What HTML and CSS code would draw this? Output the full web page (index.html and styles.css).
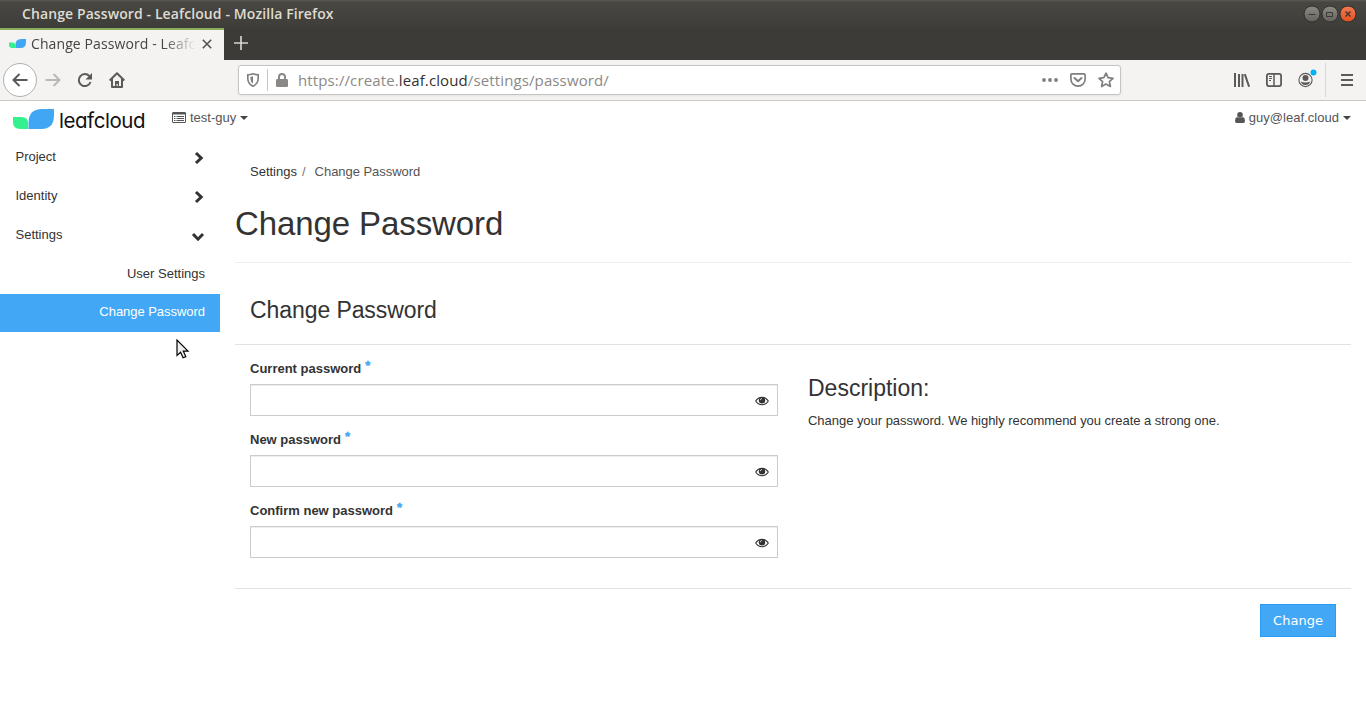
FILE: index.html
```html
<!DOCTYPE html>
<html lang="en">
<head>
<meta charset="utf-8">
<title>Change Password - Leafcloud</title>
<link rel="stylesheet" href="styles.css">
</head>
<body>
<svg class="defs" aria-hidden="true">
  <symbol id="chevron" viewBox="0 0 10 14"><path d="M2 2l5.200 5L2 12" fill="none" stroke="#333" stroke-width="3"/></symbol>
  <symbol id="eye" viewBox="0 0 14 10"><path d="M.7 5C3.800.1 10.200.1 13.300 5 10.200 9.900 3.800 9.900.7 5z" fill="none" stroke="#333" stroke-width="1.100"/><circle cx="7" cy="4.300" r="3.200" fill="#333"/><path d="M5.300 4.200A1.700 1.700 0 0 1 7 2.500" fill="none" stroke="#fff" stroke-width=".7"/></symbol>
  <symbol id="leaves" viewBox="0 0 41 20"><path d="M0 8h8.500q6.500 0 6.500 6v6H7Q0 20 0 13z" fill="#34f08f"/><path d="M15.500 20v-6Q15.500 0 29 0h12v6.500Q41 20 28 20z" fill="#41a7f5"/></symbol>
</svg>
<header class="titlebar">
  <span class="window-title">Change Password - Leafcloud - Mozilla Firefox</span>
  <svg class="window-buttons" width="54" height="18" viewBox="0 0 54 18">
    <defs>
      <linearGradient id="gray" x2="0" y2="1"><stop stop-color="#8d8b84"/><stop offset="1" stop-color="#64625c"/></linearGradient>
      <linearGradient id="orange" x2="0" y2="1"><stop stop-color="#f67a50"/><stop offset="1" stop-color="#e2501f"/></linearGradient>
    </defs>
    <g stroke="#32312d"><circle cx="9" cy="9" r="8" fill="url(#gray)"/><circle cx="27" cy="9" r="8" fill="url(#gray)"/><circle cx="45" cy="9" r="8" fill="url(#orange)"/></g>
    <g fill="none" stroke="#383733"><path d="M5.500 9.500h7M23.500 7.500h6v4h-6z"/><path d="M42.500 6.500l5 5m0-5l-5 5" stroke-width="1.400"/></g>
  </svg>
</header>
<div class="tabbar">
  <div class="tab">
    <svg width="17" height="9" viewBox="0 0 41 20" preserveAspectRatio="none"><use href="#leaves"/></svg>
    <span class="tab-title">Change Password - Leafc</span>
    <svg class="tab-close" width="10" height="10" viewBox="0 0 10 10"><path d="M.8.8l8.400 8.400m0-8.400L.8 9.200" stroke="#55534f" stroke-width="1.600"/></svg>
  </div>
  <svg class="tab-new" width="14" height="14" viewBox="0 0 14 14"><path d="M7 0v14M0 7h14" stroke="#d5d3ce" stroke-width="1.700"/></svg>
</div>
<nav class="toolbar">
  <span class="back"><svg width="16" height="14" viewBox="0 0 16 14"><path d="M15.500 7H1.500M7.500 1l-6 6 6 6" fill="none" stroke="#5b5a58" stroke-width="2"/></svg></span>
  <svg class="forward" width="16" height="14" viewBox="0 0 16 14"><path d="M.5 7h14M8.500 1l6 6-6 6" fill="none" stroke="#b9b8b6" stroke-width="2"/></svg>
  <svg class="reload" width="16" height="16" viewBox="0 0 16 16"><path d="M12.400 4.200A6 6 0 1 0 13.500 10" fill="none" stroke="#5b5a58" stroke-width="2"/><path d="M15 1v6.500H8.500z" fill="#5b5a58"/></svg>
  <svg class="home" width="16" height="16" viewBox="0 0 16 16"><path d="M.7 8.500L8 1.300l7.300 7.200M3 7v8h10V7" fill="none" stroke="#5b5a58" stroke-width="2" stroke-linejoin="round"/><path d="M6 15V9h4v6H8.800v-3H7.500v3z" fill="#5b5a58"/></svg>
  <div class="urlbar">
    <svg class="shield" width="12" height="14" viewBox="0 0 12 14"><path d="M6 .8c2 .8 3.500 1 5.200 1v4Q11 10.900 6 13.200 1 10.900.8 5.800v-4C2.500 1.800 4 1.600 6 .8z" fill="none" stroke="#817f7d" stroke-width="1.600"/><path d="M6 3.300v7.200Q3.500 9 3.400 5.800V3.900z" fill="#817f7d"/></svg>
    <span class="separator"></span>
    <svg class="lock" width="12" height="14" viewBox="0 0 12 14"><rect y="6" width="12" height="8" rx="1.300" fill="#8a8886"/><path d="M3 7V4a3 3 0 0 1 6 0v3" fill="none" stroke="#8a8886" stroke-width="2"/></svg>
    <span class="url">https://create.<b>leaf.cloud</b>/settings/password/</span>
    <svg class="dots" width="16" height="4" viewBox="0 0 16 4" fill="#817f7d"><circle cx="2" cy="2" r="1.900"/><circle cx="8" cy="2" r="1.900"/><circle cx="14" cy="2" r="1.900"/></svg>
    <svg class="pocket" width="16" height="14" viewBox="0 0 16 14"><path d="M2 .9h12q1.100 0 1.100 1.100v4.200a7.100 6.900 0 0 1-14.200 0V2Q.9.9 2 .9z" fill="none" stroke="#817f7d" stroke-width="1.700"/><path d="M4.500 5L8 8.300 11.500 5" fill="none" stroke="#817f7d" stroke-width="1.900" stroke-linecap="round" stroke-linejoin="round"/></svg>
    <svg class="star" width="16" height="16" viewBox="0 0 16 16"><path d="M8 1.200l2.100 4.500 4.900.6-3.600 3.300 1 4.900L8 12.100l-4.400 2.400 1-4.900L1 6.300l4.900-.6z" fill="none" stroke="#817f7d" stroke-width="1.700" stroke-linejoin="round"/></svg>
  </div>
  <svg class="library" width="16" height="14" viewBox="0 0 16 14"><path d="M1 0v14M5 1v13M8.500 1v13M10.800 1.200l4.300 12.500" fill="none" stroke="#5b5a58" stroke-width="2"/></svg>
  <svg class="sidebar-icon" width="16" height="14" viewBox="0 0 16 14"><rect x=".9" y=".9" width="14.200" height="12.200" rx="2" fill="none" stroke="#5b5a58" stroke-width="1.800"/><path d="M8 1v12" stroke="#5b5a58" stroke-width="1.500"/><path d="M3 3.500h3M3 5.500h3M3 7.500h2" stroke="#5b5a58"/></svg>
  <svg class="account" width="19" height="19" viewBox="0 0 19 19"><circle cx="7.500" cy="11" r="6.600" fill="none" stroke="#5b5a58" stroke-width="1.100"/><circle cx="7.500" cy="9" r="3" fill="#5b5a58"/><path d="M2.800 12.500q2 1 4.700 1t4.700-1q-.8 3.600-4.700 3.600t-4.700-3.600z" fill="#5b5a58"/><circle cx="15.500" cy="3.500" r="3" fill="#00b3f4"/></svg>
  <span class="toolbar-line"></span>
  <svg class="menu" width="12" height="12" viewBox="0 0 12 12"><path d="M0 1h12M0 6h12M0 11h12" stroke="#5b5a58" stroke-width="2"/></svg>
</nav>
<div class="topbar">
  <a class="brand"><svg width="41" height="20" viewBox="0 0 41 20"><use href="#leaves"/></svg><span>leafcloud</span></a>
  <a class="project"><svg width="14" height="11" viewBox="0 0 14 11"><path d="M1 .5h12q.5 0 .5.500v9q0 .5-.5.500H1q-.5 0-.5-.5V1Q.5.5 1 .5z" fill="#fff" stroke="#555"/><path d="M1 1.500h12" stroke="#555" stroke-width="2"/><path d="M2 4.500h1.500M2 6.500h1.500M2 8.500h1.500M4.500 4.500H12M4.500 6.500H12M4.500 8.500H12" stroke="#555"/></svg><span>test-guy</span><i class="caret"></i></a>
  <a class="user"><svg width="10" height="11" viewBox="0 0 10 11" fill="#555"><circle cx="5" cy="2.900" r="2.800"/><path d="M2 5q3 2.200 6 0 2 .7 2 3.700Q10 11 8.300 11H1.700Q0 11 0 8.700 0 5.700 2 5z"/></svg><span>guy@leaf.cloud</span><i class="caret"></i></a>
</div>
<div class="page">
  <aside class="sidebar">
    <a class="group">Project<svg width="10" height="14"><use href="#chevron"/></svg></a>
    <a class="group">Identity<svg width="10" height="14"><use href="#chevron"/></svg></a>
    <a class="group open">Settings<svg width="10" height="14"><use href="#chevron"/></svg></a>
    <a class="item">User Settings</a>
    <a class="item active">Change Password</a>
    <svg class="pointer" width="14" height="20" viewBox="0 0 14 20"><path d="M1 1v15.500l3.600-3.300 2.500 5.600 2.700-1.200-2.500-5.500H12z" fill="#eee" stroke="#000" stroke-width="1.200"/></svg>
  </aside>
  <main>
    <div class="breadcrumb"><a>Settings</a><span class="slash">/</span><span class="here">Change Password</span></div>
    <h1><span>Change Password</span></h1>
    <h2><span>Change Password</span></h2>
    <form class="columns">
      <div class="fields">
        <label><span class="name">Current password</span><sup>*</sup></label>
        <div class="input"><svg width="14" height="10"><use href="#eye"/></svg></div>
        <label><span class="name">New password</span><sup>*</sup></label>
        <div class="input"><svg width="14" height="10"><use href="#eye"/></svg></div>
        <label><span class="name">Confirm new password</span><sup>*</sup></label>
        <div class="input"><svg width="14" height="10"><use href="#eye"/></svg></div>
      </div>
      <div class="description"><h3>Description:</h3><p>Change your password. We highly recommend you create a strong one.</p></div>
    </form>
    <footer><button type="button">Change</button></footer>
  </main>
</div>
</body>
</html>
```
FILE: styles.css
```css
* { box-sizing: border-box; }
body { margin: 0; height: 712px; overflow: hidden; background: #fff; color: #333; font: 13px/18px "Liberation Sans", Arial, sans-serif; }
svg { display: block; flex: none; }
.defs { position: absolute; width: 0; height: 0; }

.titlebar { display: flex; align-items: center; height: 28px; padding: 0 9px 0 22px; background: linear-gradient(#5b5a55 0, #484742 2px, #3e3d39); font-family: "Open Sans", "Noto Sans", sans-serif; }
.window-title { flex: 1; color: #dfdbd2; font-size: 14px; font-weight: 600; letter-spacing: .1px; white-space: nowrap; }

.tabbar { display: flex; height: 32px; background: #3c3b37; font-family: "Open Sans", "Noto Sans", sans-serif; }
.tab { display: flex; align-items: center; width: 224px; padding: 0 12px 3px 9px; background: #f4f3f2; border-top: 2px solid #8cae5c; }
.tab-title { width: 165px; margin-left: 5px; white-space: nowrap; color: #45443f; font-size: 14px; letter-spacing: .1px; -webkit-mask-image: linear-gradient(to right, #000 80%, transparent); mask-image: linear-gradient(to right, #000 80%, transparent); }
.tab-close { margin-left: 6px; }
.tab-new { margin: 8px 0 0 10px; }

.toolbar { display: flex; align-items: center; height: 41px; padding: 0 13px 0 3px; background: #f4f3f2; border-bottom: 1px solid #cac8c5; font-family: "Open Sans", "Noto Sans", sans-serif; }
.back { display: grid; place-items: center; width: 34px; height: 34px; background: #fff; border: 1px solid #b1b0ae; border-radius: 50%; }
.forward { margin-left: 8px; }
.reload { margin-left: 16px; }
.home { margin-left: 16px; }
.urlbar { display: flex; align-items: center; width: 883px; height: 30px; margin-left: 113px; padding: 0 6px 0 8px; background: #fff; border: 1px solid #c6c4c1; border-radius: 3px; box-shadow: 0 1px 3px #00000010; }
.separator { width: 1px; height: 22px; margin: 0 8px; background: #c8c7c5; }
.url { flex: 1; margin-left: 10px; color: #8b8987; font-size: 15px; letter-spacing: .12px; white-space: nowrap; }
.url b { color: #33322f; font-weight: 400; }
.pocket { margin-left: 12px; }
.star { margin-left: 12px; }
.library { margin-left: 113px; }
.sidebar-icon { margin-left: 16px; }
.account { margin: -3px 0 0 16px; }
.toolbar-line { width: 1px; height: 34px; margin: 0 15px 0 8px; background: #d8d7d5; }

.topbar { display: flex; height: 36px; color: #555; }
.brand { display: flex; width: 172px; padding: 8px 0 0 13px; color: #111; }
.brand span { margin: -1px 0 0 5px; font: 400 20.500px/26px Inter, sans-serif; font-feature-settings: "cv11"; letter-spacing: -.45px; }
.project, .user { display: flex; align-items: center; height: 34px; gap: 4px; }
.project svg { margin-top: -1px; }
.user svg { margin-top: -1px; }
.user { margin-left: auto; padding-right: 15px; letter-spacing: .03px; }
.caret { border: 4.500px solid transparent; border-top: 4.500px solid #444; border-bottom: 0; }

.page { display: flex; }
.sidebar { position: relative; width: 220px; }
.group, .item { display: flex; height: 39px; align-items: center; padding: 0 16px 0 15.500px; }
.group { justify-content: space-between; }
.group svg { margin-top: 2px; }
.open svg { transform: rotate(90deg); margin: 5px 1px 0 0; }
.item { justify-content: flex-end; padding-right: 15px; }
.active { height: 38px; margin-top: 1px; padding-bottom: 3px; background: #42a8f5; color: #fff; letter-spacing: -.04px; }
.pointer { position: absolute; left: 176px; top: 202px; }

main { width: 1116px; margin-left: 15px; }
.breadcrumb { display: flex; padding: 26px 15px 0; }
.slash { margin: 0 9px 0 5px; color: #777; }
.here { color: #555; letter-spacing: -.04px; }
h1, h2, h3, p { margin: 0; font-weight: 400; }
h1 { height: 82px; padding-top: 23px; border-bottom: 1px solid #eee; font-size: 33px; line-height: 40px; letter-spacing: -.1px; }
h2 { height: 82px; padding: 33px 15px 0; border-bottom: 1px solid #e2e2e2; font-size: 23px; line-height: 28px; letter-spacing: -.08px; }
.columns { display: flex; height: 244px; border-bottom: 1px solid #e2e2e2; }
.fields { width: 558px; padding: 14px 15px 0; }
label { display: flex; height: 25px; font-weight: 700; line-height: 20px; }
sup { margin: -2px 0 0 4px; color: #42a8f5; font: 700 13px/18px "Liberation Sans", sans-serif; -webkit-text-stroke: .4px #42a8f5; }
.input { display: flex; align-items: center; justify-content: flex-end; height: 32px; margin-bottom: 14px; padding: 2px 8px 0 0; border: 1px solid #ccc; box-shadow: inset 0 1px 1px #00000013; }
.description { padding: 29px 15px 0; }
h3 { font-size: 23px; line-height: 28px; }
p { margin-top: 10px; letter-spacing: -.035px; white-space: nowrap; }
footer { display: flex; justify-content: flex-end; padding: 15px 15px 0; }
button { width: 76px; height: 33px; padding: 0; background: #42a8f5; border: 1px solid #299cf4; color: #fff; font: 13px "DejaVu Sans", sans-serif; }
```
